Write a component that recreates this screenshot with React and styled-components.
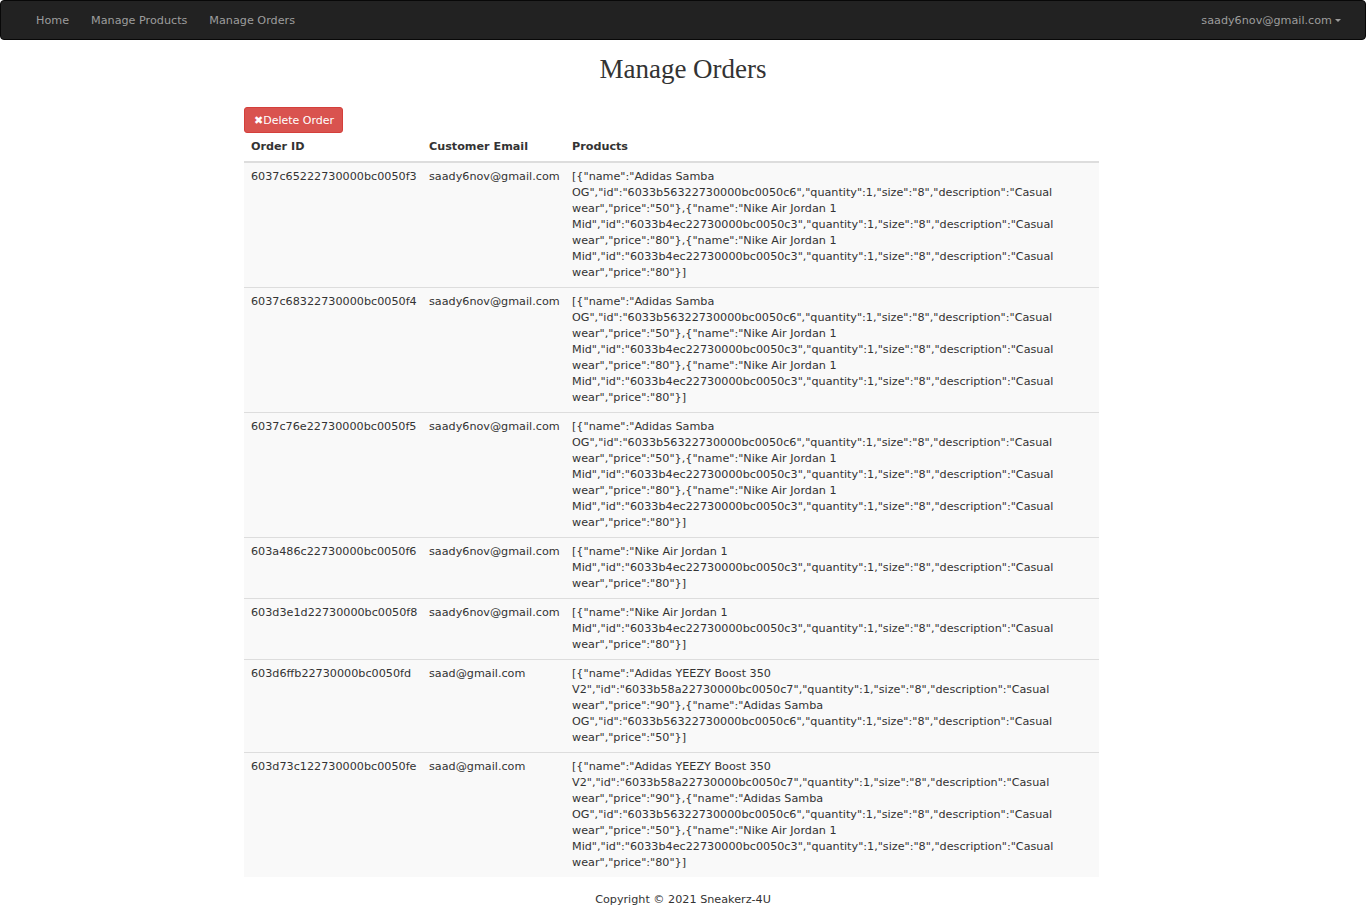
import React from "react";
import styled, { createGlobalStyle } from "styled-components";

const Global = createGlobalStyle`
  html, body { margin: 0; padding: 0; background: #fff; }
  body {
    font-family: "DejaVu Sans", Verdana, sans-serif;
    font-size: 11.2px;
    line-height: 16px;
    color: #333;
  }
`;

const Navbar = styled.nav`
  box-sizing: border-box;
  height: 40px;
  background: #222;
  border: 1px solid #080808;
  border-radius: 4px;
  display: flex;
  align-items: center;
  justify-content: space-between;
  padding: 1px 13px 0 24px;
`;

const NavGroup = styled.div`
  display: flex;
  align-items: center;
`;

const NavLink = styled.a`
  color: #9d9d9d;
  text-decoration: none;
  padding: 0 11px;
  font-size: 11.2px;
  cursor: pointer;
`;

const Caret = styled.span`
  display: inline-block;
  width: 0;
  height: 0;
  margin-left: 3px;
  vertical-align: middle;
  border-top: 3px solid #9d9d9d;
  border-left: 3px solid transparent;
  border-right: 3px solid transparent;
`;

const Title = styled.h1`
  font-family: "Liberation Serif", "Times New Roman", serif;
  font-weight: normal;
  font-size: 27px;
  line-height: 31px;
  text-align: center;
  color: #333;
  margin: 14px 0 22px;
`;

const Main = styled.main`
  width: 855px;
  margin-left: calc(50% - 439px);
`;

const DeleteButton = styled.button`
  box-sizing: border-box;
  display: inline-flex;
  align-items: center;
  height: 26px;
  padding: 0 8px 0 9px;
  background: #d9534f;
  border: 1px solid #d43f3a;
  border-radius: 3px;
  color: #fff;
  font-family: "DejaVu Sans", Verdana, sans-serif;
  font-size: 11px;
  cursor: pointer;
`;

const Table = styled.table`
  width: 855px;
  border-collapse: collapse;
  table-layout: fixed;
`;

const Col = styled.col`
  width: ${(p) => p.$w}px;
`;

const Th = styled.th`
  text-align: left;
  font-weight: bold;
  padding: 6px 7px;
  border-bottom: 2px solid #ddd;
`;

const Tr = styled.tr`
  background: #f9f9f9;
`;

const Td = styled.td`
  vertical-align: top;
  padding: 6px 7px;
  border-top: 1px solid #ddd;
`;

const Footer = styled.footer`
  text-align: center;
  padding: 15px 0 8px;
  font-size: 11.2px;
`;

const samba = `{"name":"Adidas Samba OG","id":"6033b56322730000bc0050c6","quantity":1,"size":"8","description":"Casual wear","price":"50"}`;
const jordan = `{"name":"Nike Air Jordan 1 Mid","id":"6033b4ec22730000bc0050c3","quantity":1,"size":"8","description":"Casual wear","price":"80"}`;
const yeezy = `{"name":"Adidas YEEZY Boost 350 V2","id":"6033b58a22730000bc0050c7","quantity":1,"size":"8","description":"Casual wear","price":"90"}`;

const list = (...items) => `[${items.join(",")}]`;

const orders = [
  { id: "6037c65222730000bc0050f3", email: "saady6nov@gmail.com", products: list(samba, jordan, jordan) },
  { id: "6037c68322730000bc0050f4", email: "saady6nov@gmail.com", products: list(samba, jordan, jordan) },
  { id: "6037c76e22730000bc0050f5", email: "saady6nov@gmail.com", products: list(samba, jordan, jordan) },
  { id: "603a486c22730000bc0050f6", email: "saady6nov@gmail.com", products: list(jordan) },
  { id: "603d3e1d22730000bc0050f8", email: "saady6nov@gmail.com", products: list(jordan) },
  { id: "603d6ffb22730000bc0050fd", email: "saad@gmail.com", products: list(yeezy, samba) },
  { id: "603d73c122730000bc0050fe", email: "saad@gmail.com", products: list(yeezy, samba, jordan) },
];

export default function App() {
  return (
    <>
      <Global />
      <Navbar>
        <NavGroup>
          <NavLink>Home</NavLink>
          <NavLink>Manage Products</NavLink>
          <NavLink>Manage Orders</NavLink>
        </NavGroup>
        <NavGroup>
          <NavLink>
            saady6nov@gmail.com<Caret />
          </NavLink>
        </NavGroup>
      </Navbar>
      <Title>Manage Orders</Title>
      <Main>
        <DeleteButton>✖Delete Order</DeleteButton>
        <Table>
          <colgroup>
            <Col $w={178} />
            <Col $w={143} />
            <Col $w={534} />
          </colgroup>
          <thead>
            <tr>
              <Th>Order ID</Th>
              <Th>Customer Email</Th>
              <Th>Products</Th>
            </tr>
          </thead>
          <tbody>
            {orders.map((o) => (
              <Tr key={o.id}>
                <Td>{o.id}</Td>
                <Td>{o.email}</Td>
                <Td>{o.products}</Td>
              </Tr>
            ))}
          </tbody>
        </Table>
      </Main>
      <Footer>Copyright © 2021 Sneakerz-4U</Footer>
    </>
  );
}
